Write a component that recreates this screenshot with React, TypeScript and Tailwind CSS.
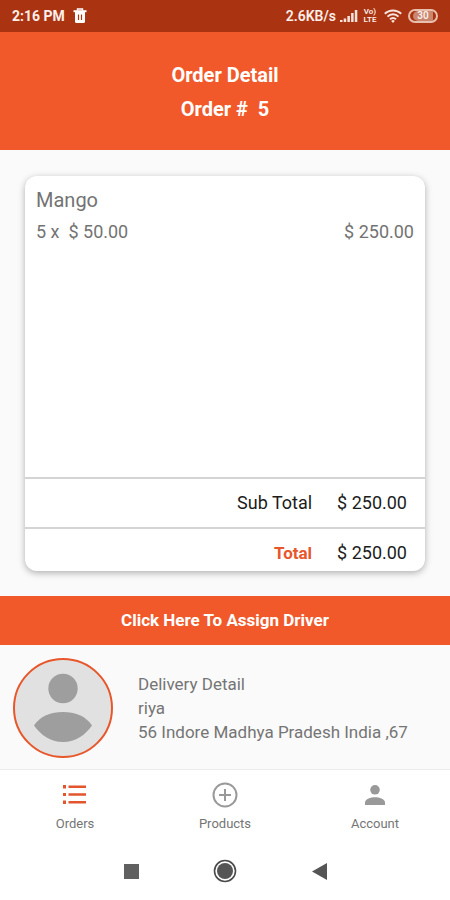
import { FC, ReactNode } from "react";

interface tabI {
    label: string;
    icon: ReactNode;
}

const TrashIcon: FC = () => (
    <svg className="w-3.5 h-4" viewBox="0 0 14 16" fill="none">
        <path d="M4.5 2.5V1h5v1.5" stroke="#fff" strokeWidth="1.4" />
        <path d="M0.5 2.2h13v2h-13z" fill="#fff" />
        <path d="M2 4h10v9.5a1.5 1.5 0 0 1-1.5 1.5h-7A1.5 1.5 0 0 1 2 13.5z" fill="#fff" />
        <path d="M5.5 6.5v5.500M8.500 6.500v5.500" stroke="#aa3311" strokeWidth="1.2" />
    </svg>
);

const SignalIcon: FC = () => (
    <svg className="w-[18px] h-3.5" viewBox="0 0 18 14" fill="#f8e4dc">
        <path d="M0 11h2.500v2H0zM3.700 9.500h2.500V13H3.700zM7.400 7h2.500v6H7.400zM11.100 4h2.500v9h-2.500zM14.800 1h2.500v12h-2.500z" />
    </svg>
);

const WifiIcon: FC = () => (
    <svg className="w-[18px] h-3.5" viewBox="0 0 18 14" fill="none" stroke="#f8e4dc" strokeWidth="2">
        <path d="M0.800 4.800a11.600 11.600 0 0 1 16.400 0" />
        <path d="M3.500 7.600a7.800 7.800 0 0 1 11 0" />
        <path d="M6 10.200a4.200 4.200 0 0 1 6 0" />
        <path d="M9 14l-1.800-2a2.500 2.500 0 0 1 3.600 0z" fill="#f8e4dc" stroke="none" />
    </svg>
);

const ListIcon: FC = () => (
    <svg className="w-6 h-5" viewBox="0 0 24 20" fill="#e2552d">
        <path d="M0 0h3v3.500H0zM5.500 0.500H23V3H5.500zM0 8h3v3H0zM5.500 8.200H23v2.500H5.500zM0 15.500h3V19H0zM5.500 16H23v2.500H5.500z" />
    </svg>
);

const PlusIcon: FC = () => (
    <svg className="w-[26px] h-[26px]" viewBox="0 0 26 26" fill="none" stroke="#999" strokeWidth="2">
        <circle cx="13" cy="13" r="11.500" />
        <path d="M13 7v12M7 13h12" />
    </svg>
);

const PersonIcon: FC = () => (
    <svg className="w-5 h-5" viewBox="0 0 20 20" fill="#999">
        <circle cx="10" cy="4.800" r="4.800" />
        <path d="M0 20v-2.500C0 14 6 12.300 10 12.300s10 1.700 10 5.200V20z" />
    </svg>
);

const tabs: tabI[] = [
    { label: "Orders", icon: <ListIcon /> },
    { label: "Products", icon: <PlusIcon /> },
    { label: "Account", icon: <PersonIcon /> },
];

const StatusBar: FC = () => {
    return (
        <div className="flex h-8 items-center justify-between bg-[#aa3311] px-3 text-[#fdf0ea]">
            <div className="flex items-center gap-2">
                <span className="text-sm font-bold">2:16 PM</span>
                <TrashIcon />
            </div>
            <div className="flex items-center">
                <span className="text-sm font-semibold">2.6KB/s</span>
                <span className="ml-1"><SignalIcon /></span>
                <span className="ml-1 flex w-4 flex-col items-center text-[8px] leading-[8px] font-semibold">
                    <span>Vo)</span>
                    <span>LTE</span>
                </span>
                <span className="ml-1.5"><WifiIcon /></span>
                <span className="ml-1.5 flex h-3.5 w-[30px] items-center justify-center rounded-full border-2 border-[#e9bfae]">
                    <span className="rounded-l-full bg-[#c98770] px-1 text-[10px] leading-[10px] font-semibold">30</span>
                </span>
            </div>
        </div>
    )
}

const OrderCard: FC = () => {
    return (
        <section className="mx-[25px] mt-[26px] overflow-hidden rounded-xl bg-white shadow-[0_2px_7px_rgba(0,0,0,0.3)]">
            <div className="h-[301px] px-[11px] pt-3 text-[#737373]">
                <h2 className="text-xl leading-6">Mango</h2>
                <div className="mt-2 flex justify-between text-lg leading-6">
                    <p className="whitespace-pre">5 x  $ 50.00</p>
                    <p>$ 250.00</p>
                </div>
            </div>
            <div className="flex h-[50px] items-center justify-end gap-[25px] border-t-2 border-[#d4d4d4] pr-[18px] text-lg text-[#1c1c1c]">
                <p>Sub Total</p>
                <p>$ 250.00</p>
            </div>
            <div className="flex h-11 items-end justify-end gap-[25px] border-t-2 border-[#d4d4d4] pr-[18px] pb-1.5 text-lg leading-6 text-[#1c1c1c]">
                <p className="text-[17px] font-bold text-[#e8572b]">Total</p>
                <p>$ 250.00</p>
            </div>
        </section>
    )
}

const DriverDetail: FC = () => {
    return (
        <section className="flex items-center gap-[25px] px-[13px] pt-[13px] pb-[11px]">
            <svg className="h-[100px] w-[100px] shrink-0" viewBox="0 0 100 100">
                <circle cx="50" cy="50" r="49" fill="#e1e1e1" stroke="#e8572b" strokeWidth="2" />
                <circle cx="50" cy="30.500" r="14.700" fill="#9e9e9e" />
                <path d="M21 67.500C27 58 38 54 50 54s23 4 29 13.500C72 77 63 84 50 84s-22-7-29-16.500z" fill="#9e9e9e" />
            </svg>
            <div className="text-[17px] leading-6 text-[#757575]">
                <p>Delivery Detail</p>
                <p>riya</p>
                <p>56 Indore Madhya Pradesh India ,67</p>
            </div>
        </section>
    )
}

const App: FC = () => {
    return (
        <div className="min-h-screen bg-[#fafafa] font-['Roboto',sans-serif]">
            <StatusBar />
            <header className="bg-[#f1592a] pt-[26px] pb-6 text-center text-xl leading-[34px] font-bold text-white">
                <h1>Order Detail</h1>
                <p className="whitespace-pre">Order #  5</p>
            </header>
            <OrderCard />
            <button className="mt-[25px] block h-[49px] w-full bg-[#f1592a] text-[17px] font-bold text-white">
                Click Here To Assign Driver
            </button>
            <DriverDetail />
            <nav className="grid h-[73px] grid-cols-3 border-t border-[#ececec] bg-white">
                {tabs.map((tab) => (
                    <button key={tab.label} className="flex flex-col items-center pt-3 text-[13px] leading-4 text-[#757575]">
                        <span className="flex h-[26px] items-center">{tab.icon}</span>
                        <span className="mt-2">{tab.label}</span>
                    </button>
                ))}
            </nav>
            <div className="flex h-[58px] items-center justify-center gap-[70px] bg-white">
                <button aria-label="Recent apps" className="flex w-6 justify-center">
                    <svg className="h-[15px] w-[15px]" viewBox="0 0 15 15" fill="#606060">
                        <path d="M0 0h15v15H0z" />
                    </svg>
                </button>
                <button aria-label="Home" className="flex w-6 justify-center">
                    <svg className="h-6 w-6" viewBox="0 0 24 24">
                        <circle cx="12" cy="12" r="10.500" fill="none" stroke="#4a4a4a" strokeWidth="1.600" />
                        <circle cx="12" cy="12" r="8" fill="#555" />
                    </svg>
                </button>
                <button aria-label="Back" className="flex w-6 justify-center">
                    <svg className="h-[17px] w-[15px]" viewBox="0 0 15 17" fill="#555">
                        <path d="M15 0v17L0 8.500z" />
                    </svg>
                </button>
            </div>
        </div>
    )
}

export default App
